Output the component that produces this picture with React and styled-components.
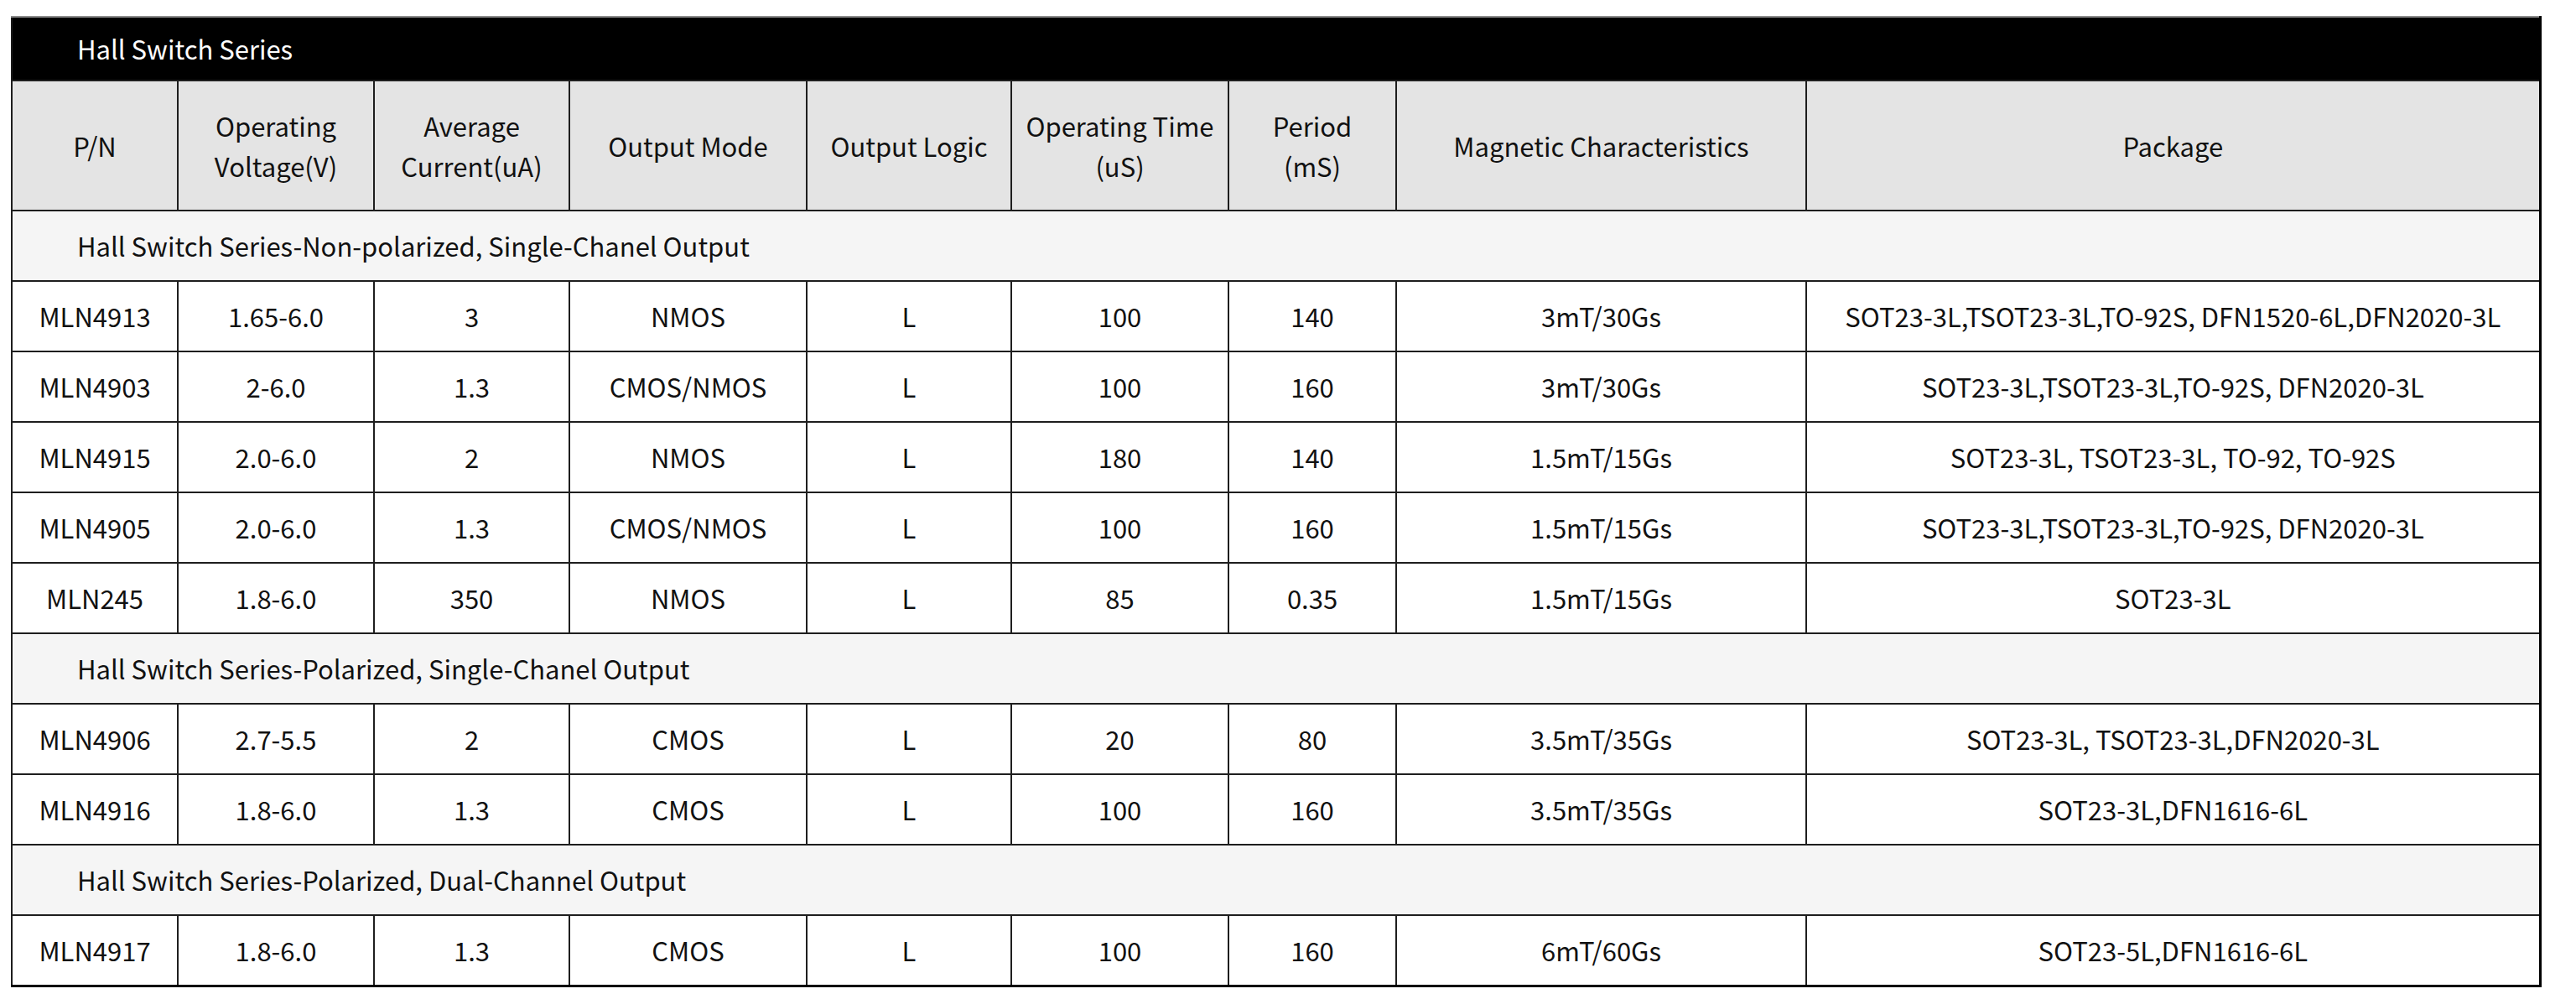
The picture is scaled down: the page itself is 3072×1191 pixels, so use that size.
import React from "react";
import styled, { createGlobalStyle } from "styled-components";

const GlobalStyle = createGlobalStyle`
  html, body {
    margin: 0;
    padding: 0;
    background: #ffffff;
  }
  body {
    font-family: "Noto Sans CJK SC", "Noto Sans", sans-serif;
    color: #111111;
  }
`;

const Page = styled.div`
  padding: 19px 0 0 13px;
`;

const Table = styled.table`
  width: 3015px;
  table-layout: fixed;
  border-collapse: collapse;
  border-top: 2px solid #8c8c8c;
  border-left: 2px solid #1a1a1a;
  border-right: 3px solid #000000;
  border-bottom: 3px solid #000000;
  font-size: 31px;
  line-height: 48px;
`;

const TitleCell = styled.th`
  height: 74px;
  padding: 0 0 0 77px;
  background: #000000;
  color: #ffffff;
  font-weight: 400;
  text-align: left;
  border-top: 2px solid #8c8c8c;
`;

const HeadCell = styled.th`
  height: 153px;
  padding: 0 6px;
  background: #e4e4e4;
  border: 2px solid #1e1e1e;
  font-weight: 400;
  text-align: center;
  vertical-align: middle;
`;

const SectionCell = styled.td`
  height: 82px;
  padding: 0 0 0 77px;
  background: #f5f5f5;
  border: 2px solid #1e1e1e;
  text-align: left;
`;

const Cell = styled.td`
  height: 82px;
  padding: 0 4px;
  background: #ffffff;
  border: 2px solid #1e1e1e;
  text-align: center;
  white-space: nowrap;
`;

const widths = [198, 234, 233, 283, 244, 259, 200, 489, 875];

const headers = [
  ["P/N"],
  ["Operating", "Voltage(V)"],
  ["Average", "Current(uA)"],
  ["Output Mode"],
  ["Output Logic"],
  ["Operating Time", "(uS)"],
  ["Period", "(mS)"],
  ["Magnetic Characteristics"],
  ["Package"],
];

const groups = [
  {
    title: "Hall Switch Series-Non-polarized, Single-Chanel Output",
    rows: [
      ["MLN4913", "1.65-6.0", "3", "NMOS", "L", "100", "140", "3mT/30Gs", "SOT23-3L,TSOT23-3L,TO-92S, DFN1520-6L,DFN2020-3L"],
      ["MLN4903", "2-6.0", "1.3", "CMOS/NMOS", "L", "100", "160", "3mT/30Gs", "SOT23-3L,TSOT23-3L,TO-92S, DFN2020-3L"],
      ["MLN4915", "2.0-6.0", "2", "NMOS", "L", "180", "140", "1.5mT/15Gs", "SOT23-3L, TSOT23-3L, TO-92, TO-92S"],
      ["MLN4905", "2.0-6.0", "1.3", "CMOS/NMOS", "L", "100", "160", "1.5mT/15Gs", "SOT23-3L,TSOT23-3L,TO-92S, DFN2020-3L"],
      ["MLN245", "1.8-6.0", "350", "NMOS", "L", "85", "0.35", "1.5mT/15Gs", "SOT23-3L"],
    ],
  },
  {
    title: "Hall Switch Series-Polarized, Single-Chanel Output",
    rows: [
      ["MLN4906", "2.7-5.5", "2", "CMOS", "L", "20", "80", "3.5mT/35Gs", "SOT23-3L, TSOT23-3L,DFN2020-3L"],
      ["MLN4916", "1.8-6.0", "1.3", "CMOS", "L", "100", "160", "3.5mT/35Gs", "SOT23-3L,DFN1616-6L"],
    ],
  },
  {
    title: "Hall Switch Series-Polarized, Dual-Channel Output",
    rows: [
      ["MLN4917", "1.8-6.0", "1.3", "CMOS", "L", "100", "160", "6mT/60Gs", "SOT23-5L,DFN1616-6L"],
    ],
  },
];

export default function App() {
  return (
    <>
      <GlobalStyle />
      <Page>
        <Table>
          <colgroup>
            {widths.map((w, i) => (
              <col key={i} style={{ width: w }} />
            ))}
          </colgroup>
          <thead>
            <tr>
              <TitleCell colSpan={9}>Hall Switch Series</TitleCell>
            </tr>
            <tr>
              {headers.map((lines, i) => (
                <HeadCell key={i}>
                  {lines.map((l, j) => (
                    <div key={j}>{l}</div>
                  ))}
                </HeadCell>
              ))}
            </tr>
          </thead>
          <tbody>
            {groups.map((g) => (
              <React.Fragment key={g.title}>
                <tr>
                  <SectionCell colSpan={9}>{g.title}</SectionCell>
                </tr>
                {g.rows.map((r) => (
                  <tr key={r[0]}>
                    {r.map((v, i) => (
                      <Cell key={i}>{v}</Cell>
                    ))}
                  </tr>
                ))}
              </React.Fragment>
            ))}
          </tbody>
        </Table>
      </Page>
    </>
  );
}
